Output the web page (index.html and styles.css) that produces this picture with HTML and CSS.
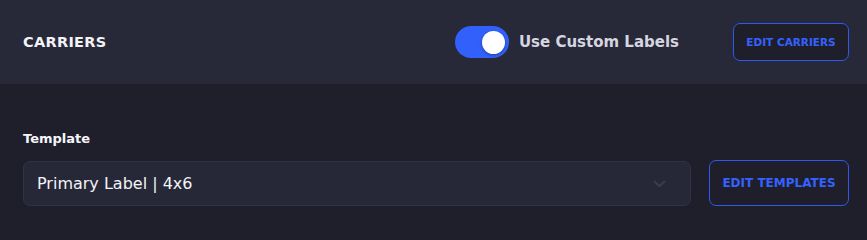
FILE: index.html
```html
<!DOCTYPE html>
<html lang="en">
<head>
<meta charset="utf-8">
<link rel="stylesheet" href="styles.css">
</head>
<body>
<div class="panel">
  <header class="head">
    <h2 class="title">CARRIERS</h2>
    <div class="head-right">
      <label class="switch-row">
        <span class="switch"><span class="knob"></span></span>
        <span class="switch-label">Use Custom Labels</span>
      </label>
      <button class="btn btn-sm">EDIT CARRIERS</button>
    </div>
  </header>
  <section class="body">
    <div class="field-label">Template</div>
    <div class="field-row">
      <div class="select">
        <span class="select-value">Primary Label | 4x6</span>
        <svg class="chev" width="13" height="8" viewBox="0 0 13 8"><path d="M1.5 1.5 L6.5 6 L11.5 1.5" fill="none" stroke="#3a3c52" stroke-width="2" stroke-linecap="round" stroke-linejoin="round"/></svg>
      </div>
      <button class="btn btn-lg">EDIT TEMPLATES</button>
    </div>
  </section>
</div>
</body>
</html>
```
FILE: styles.css
```css
* { box-sizing: border-box; }
html, body { margin: 0; padding: 0; }
html { background: #1f1f2c; height: 227px; overflow: hidden; }
body {
  width: 867px;
  height: 227px;
  background: #1f1f2c;
  font-family: "DejaVu Sans", "Noto Sans", sans-serif;
  overflow: hidden;
}
.panel { width: 867px; }
.head {
  height: 84px;
  background: #272838;
  display: flex;
  align-items: center;
  justify-content: space-between;
  padding: 0 18px 0 23px;
}
.title {
  margin: 0;
  color: #f2f2f7;
  font-size: 14.5px;
  font-weight: 700;
  letter-spacing: 0.3px;
}
.head-right {
  display: flex;
  align-items: center;
}
.switch-row {
  display: flex;
  align-items: center;
  gap: 10px;
  margin-right: 54px;
}
.switch {
  width: 54px;
  height: 32px;
  border-radius: 16px;
  background: #3160fb;
  display: flex;
  align-items: center;
  justify-content: flex-end;
  padding-right: 4px;
}
.knob {
  width: 23px;
  height: 23px;
  border-radius: 50%;
  background: #ffffff;
  box-shadow: 0 1px 3px rgba(0,0,0,0.35);
}
.switch-label {
  color: #d6d6e0;
  font-size: 15px;
  font-weight: 700;
  letter-spacing: 0;
}
.btn {
  background: #1f1f2c;
  border: 1px solid #2f58f0;
  color: #3562ff;
  font-family: inherit;
  font-weight: 700;
  border-radius: 7px;
  padding: 0;
  display: flex;
  align-items: center;
  justify-content: center;
}
.btn-sm {
  width: 116px;
  height: 38px;
  font-size: 10.5px;
}
.body {
  padding: 47px 18px 0 23px;
}
.field-label {
  color: #f5f5fa;
  font-size: 13px;
  font-weight: 700;
  line-height: 16px;
}
.field-row {
  display: flex;
  align-items: center;
  gap: 18px;
  margin-top: 13px;
}
.select {
  flex: 1;
  height: 45px;
  background: #272837;
  border: 1px solid #30324a;
  border-radius: 7px;
  display: flex;
  align-items: center;
  justify-content: space-between;
  padding: 0 24px 0 13px;
}
.select-value {
  color: #f3f3f8;
  font-size: 16px;
}
.chev { display: block; margin-top: 2px; }
.btn-lg {
  width: 140px;
  height: 46px;
  font-size: 12px;
}
```
